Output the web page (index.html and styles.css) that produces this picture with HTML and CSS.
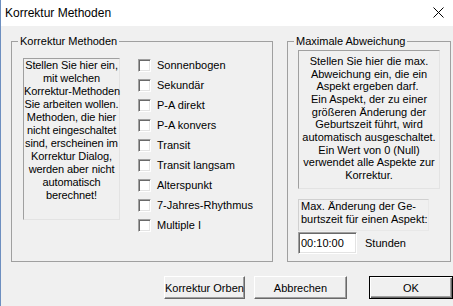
FILE: index.html
```html
<!DOCTYPE html>
<html lang="de">
<head>
<meta charset="utf-8">
<title>Korrektur Methoden</title>
<link rel="stylesheet" href="styles.css">
</head>
<body>
<div class="window">
  <div class="titlebar">
    <span class="title">Korrektur Methoden</span>
    <svg class="close" width="11" height="11" viewBox="0 0 11 11"><path d="M0.5 0.5 L10.5 10.5 M10.5 0.5 L0.5 10.5" stroke="#000" stroke-width="1" fill="none"/></svg>
  </div>
  <div class="client">
    <div class="groups">
      <fieldset class="group group-left">
        <legend>Korrektur Methoden</legend>
        <div class="left-body">
          <div class="desc desc-left">Stellen Sie hier ein,<br>mit welchen<br>Korrektur-Methoden<br>Sie arbeiten wollen.<br>Methoden, die hier<br>nicht eingeschaltet<br>sind, erscheinen im<br>Korrektur Dialog,<br>werden aber nicht<br>automatisch<br>berechnet!</div>
          <ul class="checks">
            <li><span class="cb"></span>Sonnenbogen</li>
            <li><span class="cb"></span>Sekundär</li>
            <li><span class="cb"></span>P-A direkt</li>
            <li><span class="cb"></span>P-A konvers</li>
            <li><span class="cb"></span>Transit</li>
            <li><span class="cb"></span>Transit langsam</li>
            <li><span class="cb"></span>Alterspunkt</li>
            <li><span class="cb"></span>7-Jahres-Rhythmus</li>
            <li><span class="cb"></span>Multiple I</li>
          </ul>
        </div>
      </fieldset>
      <fieldset class="group group-right">
        <legend>Maximale Abweichung</legend>
        <div class="desc desc-right">Stellen Sie hier die max.<br>Abweichung ein, die ein<br>Aspekt ergeben darf.&nbsp;<br>Ein Aspekt, der zu einer<br>größeren Änderung der<br>Geburtszeit führt, wird<br>automatisch ausgeschaltet.<br>Ein Wert von 0 (Null)<br>verwendet alle Aspekte zur<br>Korrektur.</div>
        <div class="maxbox">Max. Änderung der Ge-<br>burtszeit für einen Aspekt:</div>
        <div class="editrow"><span class="edit">00:10:00</span><span class="unit">Stunden</span></div>
      </fieldset>
    </div>
    <div class="buttons">
      <span class="btn btn-orben">Korrektur Orben</span>
      <span class="btn btn-cancel">Abbrechen</span>
      <span class="btn btn-ok">OK</span>
    </div>
  </div>
</div>
</body>
</html>
```
FILE: styles.css
```css
html, body {
  margin: 0;
  padding: 0;
  background: #f0f0f0;
}
body {
  font-family: "Liberation Sans", Arial, sans-serif;
  font-size: 11px;
  color: #000;
}
.window {
  width: 453px;
  height: 306px;
  box-sizing: border-box;
  border-left: 1px solid #6d8fc0;
  display: flex;
  flex-direction: column;
  background: #f0f0f0;
  overflow: hidden;
}
.titlebar {
  height: 26px;
  flex: none;
  background: #fff;
  display: flex;
  align-items: center;
  padding: 0 5px 0 4px;
  font-size: 12px;
}
.title {
  flex: 1;
  margin-top: -1px;
}
.close {
  display: block;
  margin-right: 4px;
  margin-top: -1px;
}
.client {
  flex: 1;
  padding: 9px 0 0 10px;
}
.groups {
  display: flex;
  gap: 14px;
}
.group {
  margin: 0;
  padding: 0;
  min-width: 0;
  height: 227px;
  box-sizing: border-box;
  border: 1px solid #a0a0a0;
}
.group legend {
  margin-left: 6px;
  padding: 0 2px;
  line-height: 13px;
  font-size: 11px;
}
.group-left {
  width: 262px;
}
.group-right {
  width: 164px;
}
.left-body {
  display: flex;
  align-items: flex-start;
  padding-left: 11px;
}
.desc {
  box-sizing: border-box;
  border: 1px solid;
  border-color: #a0a0a0 #e3e3e3 #e3e3e3 #a0a0a0;
  text-align: center;
  white-space: nowrap;
  line-height: 13px;
}
.desc-left {
  width: 97px;
  height: 162px;
  margin-top: 10px;
  letter-spacing: -0.1px;
}
.checks {
  list-style: none;
  margin: 7px 0 0 18px;
  padding: 0;
}
.checks li {
  height: 20px;
  display: flex;
  align-items: center;
  white-space: nowrap;
}
.cb {
  width: 13px;
  height: 13px;
  box-sizing: border-box;
  margin-right: 6px;
  background: #fff;
  border: 1px solid;
  border-color: #a0a0a0 #fff #fff #a0a0a0;
  box-shadow: inset 1px 1px 0 #696969, inset -1px -1px 0 #e3e3e3;
}
.desc-right {
  width: 142px;
  height: 139px;
  margin: 2px 0 0 10px;
  padding-top: 4px;
  line-height: 12.67px;
}
.maxbox {
  width: 131px;
  height: 32px;
  box-sizing: border-box;
  margin: 10px 0 0 10px;
  padding: 0 2px;
  border: 1px solid;
  border-color: #d0d0d0 #e8e8e8 #e8e8e8 #d0d0d0;
  line-height: 13px;
  white-space: nowrap;
}
.editrow {
  display: flex;
  align-items: center;
  margin: 1px 0 0 10px;
}
.edit {
  width: 59px;
  height: 22px;
  box-sizing: border-box;
  background: #fff;
  border: 1px solid;
  border-color: #a0a0a0 #fff #fff #a0a0a0;
  box-shadow: inset 1px 1px 0 #696969, inset -1px -1px 0 #e3e3e3;
  padding-left: 2px;
  line-height: 20px;
}
.unit {
  margin-left: 8px;
}
.buttons {
  display: flex;
  margin-top: 14px;
}
.btn {
  height: 23px;
  box-sizing: border-box;
  display: flex;
  align-items: center;
  justify-content: center;
  background: #f0f0f0;
  border: 1px solid;
  border-color: #fff #696969 #696969 #fff;
  box-shadow: inset -1px -1px 0 #a0a0a0;
  white-space: nowrap;
}
.btn-orben {
  width: 83px;
  margin-left: 153px;
}
.btn-cancel {
  width: 96px;
  margin-left: 9px;
}
.btn-ok {
  width: 84px;
  margin-left: 22px;
  flex: none;
  border-color: #000;
  box-shadow: inset 1px 1px 0 #fff, inset -1px -1px 0 #696969, inset -2px -2px 0 #a0a0a0;
}
```
